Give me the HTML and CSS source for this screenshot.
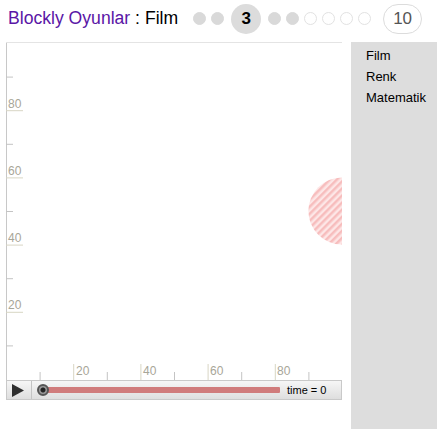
FILE: index.html
```html
<!DOCTYPE html>
<html>
<head>
<meta charset="utf-8">
<link rel="stylesheet" href="styles.css">
</head>
<body>
<header class="header">
  <h1 class="title"><span class="title-link">Blockly Oyunlar</span> : Film</h1>
  <div class="levels">
    <span class="dot done"></span>
    <span class="dot done"></span>
    <span class="level current">3</span>
    <span class="dot done"></span>
    <span class="dot done"></span>
    <span class="dot"></span>
    <span class="dot"></span>
    <span class="dot"></span>
    <span class="dot"></span>
    <span class="level last">10</span>
  </div>
</header>
<main class="main">
  <section class="vis">
    <svg class="graph" width="336" height="338" viewBox="0 0 336 338">
      <defs>
        <pattern id="stripes" width="5" height="5" patternUnits="userSpaceOnUse" patternTransform="rotate(45)">
          <rect width="5" height="5" fill="#fde6e6"/>
          <rect width="2.5" height="5" fill="#f7bdbd"/>
        </pattern>
      </defs>
      <line x1="0.5" y1="0" x2="0.5" y2="338" stroke="#c8c8c8"/>
      <line x1="0" y1="0.5" x2="336" y2="0.5" stroke="#e4e4e4"/>
      <g stroke="#c4c4c4" stroke-width="1">
        <line x1="0" y1="35.1" x2="7" y2="35.1"/>
        <line x1="0" y1="102.3" x2="7" y2="102.3"/>
        <line x1="0" y1="169.5" x2="7" y2="169.5"/>
        <line x1="0" y1="236.7" x2="7" y2="236.7"/>
        <line x1="0" y1="303.9" x2="7" y2="303.9"/>
        <line x1="0" y1="68.7" x2="17" y2="68.7" stroke="#d8d6c4"/>
        <line x1="0" y1="135.9" x2="17" y2="135.9" stroke="#d8d6c4"/>
        <line x1="0" y1="203.1" x2="17" y2="203.1" stroke="#d8d6c4"/>
        <line x1="0" y1="270.3" x2="17" y2="270.3" stroke="#d8d6c4"/>
      </g>
      <g class="axis-label">
        <text x="2" y="66">80</text>
        <text x="2" y="133">60</text>
        <text x="2" y="200">40</text>
        <text x="2" y="267">20</text>
      </g>
      <g stroke="#c4c4c4" stroke-width="1">
        <line x1="34.1" y1="330" x2="34.1" y2="338"/>
        <line x1="101.3" y1="330" x2="101.3" y2="338"/>
        <line x1="168.5" y1="330" x2="168.5" y2="338"/>
        <line x1="235.7" y1="330" x2="235.7" y2="338"/>
        <line x1="302.9" y1="330" x2="302.9" y2="338"/>
        <line x1="67.7" y1="322" x2="67.7" y2="338" stroke="#d8d6c4"/>
        <line x1="134.9" y1="322" x2="134.9" y2="338" stroke="#d8d6c4"/>
        <line x1="202.1" y1="322" x2="202.1" y2="338" stroke="#d8d6c4"/>
        <line x1="269.3" y1="322" x2="269.3" y2="338" stroke="#d8d6c4"/>
      </g>
      <g class="axis-label">
        <text x="70" y="333">20</text>
        <text x="137" y="333">40</text>
        <text x="204" y="333">60</text>
        <text x="271" y="333">80</text>
      </g>
      <circle cx="336" cy="169" r="33.6" fill="url(#stripes)"/>
    </svg>
    <div class="toolbar">
      <button class="play" aria-label="play">
        <svg width="12" height="13" viewBox="0 0 12 13"><path d="M0 0 L12 6.5 L0 13 Z" fill="#2e2e2e"/></svg>
      </button>
      <div class="slider">
        <div class="track"></div>
        <span class="knob"></span>
      </div>
      <span class="time">time = 0</span>
    </div>
  </section>
  <aside class="toolbox">
    <div class="cat">Film</div>
    <div class="cat">Renk</div>
    <div class="cat">Matematik</div>
  </aside>
</main>
</body>
</html>
```

FILE: styles.css
```css
html, body {
  margin: 0;
  padding: 0;
  background: #fff;
  font-family: "Liberation Sans", Arial, sans-serif;
  width: 443px;
  height: 429px;
  overflow: hidden;
}

.header {
  height: 42px;
  display: flex;
  align-items: center;
  padding-left: 8px;
  box-sizing: border-box;
  padding-bottom: 5px;
}

.title {
  margin: 0;
  font-size: 17.6px;
  font-weight: normal;
  color: #000;
  white-space: nowrap;
}

.title-link {
  color: #5a16a6;
}

.levels {
  display: flex;
  align-items: center;
  gap: 5px;
  margin-left: 15px;
}

.dot {
  width: 13px;
  height: 13px;
  border-radius: 50%;
  box-sizing: border-box;
  border: 1px solid #e2e2e2;
  background: #fff;
}

.dot.done {
  background: #d9d9d9;
  border-color: #d9d9d9;
}

.level {
  height: 30px;
  min-width: 30px;
  border-radius: 15px;
  box-sizing: border-box;
  display: flex;
  align-items: center;
  justify-content: center;
  font-size: 17px;
  margin: 0 2px;
}

.level.current {
  background: #dcdcdc;
  font-weight: bold;
  color: #000;
}

.level.last {
  border: 1px solid #dcdcdc;
  color: #555;
  padding: 0 9px;
  margin-left: 7px;
}

.main {
  display: flex;
  padding-left: 6px;
  gap: 9px;
  height: 387px;
}

.vis {
  width: 336px;
  display: flex;
  flex-direction: column;
}

.graph {
  display: block;
}

.axis-label {
  font-family: "Liberation Sans", Arial, sans-serif;
  font-size: 12px;
  fill: #a8a698;
}

.toolbar {
  height: 20px;
  box-sizing: border-box;
  border: 1px solid #c9c9c9;
  background: linear-gradient(#f6f6f6, #dedede);
  display: flex;
  align-items: center;
}

.play {
  width: 25px;
  height: 100%;
  border: none;
  border-right: 1px solid #c4c4c4;
  background: transparent;
  padding: 0 0 0 5px;
  display: flex;
  align-items: center;
  margin: 0;
}

.slider {
  position: relative;
  width: 245px;
  height: 18px;
  margin-left: 3px;
}

.track {
  position: absolute;
  left: 8px;
  right: 0;
  top: 6px;
  height: 6px;
  background: #d07b7b;
  border-radius: 1px;
}

.knob {
  position: absolute;
  left: 2px;
  top: 3px;
  width: 12px;
  height: 12px;
  box-sizing: border-box;
  border-radius: 50%;
  border: 2px solid #555;
  background: radial-gradient(circle, #222 0 2px, #999 3px);
}

.time {
  font-size: 11px;
  color: #000;
  margin-left: 7px;
  white-space: nowrap;
}

.toolbox {
  width: 86px;
  background: #dddddd;
  padding: 3px 0 0 15px;
  box-sizing: border-box;
}

.cat {
  font-size: 13px;
  line-height: 21px;
  color: #000;
}
```
